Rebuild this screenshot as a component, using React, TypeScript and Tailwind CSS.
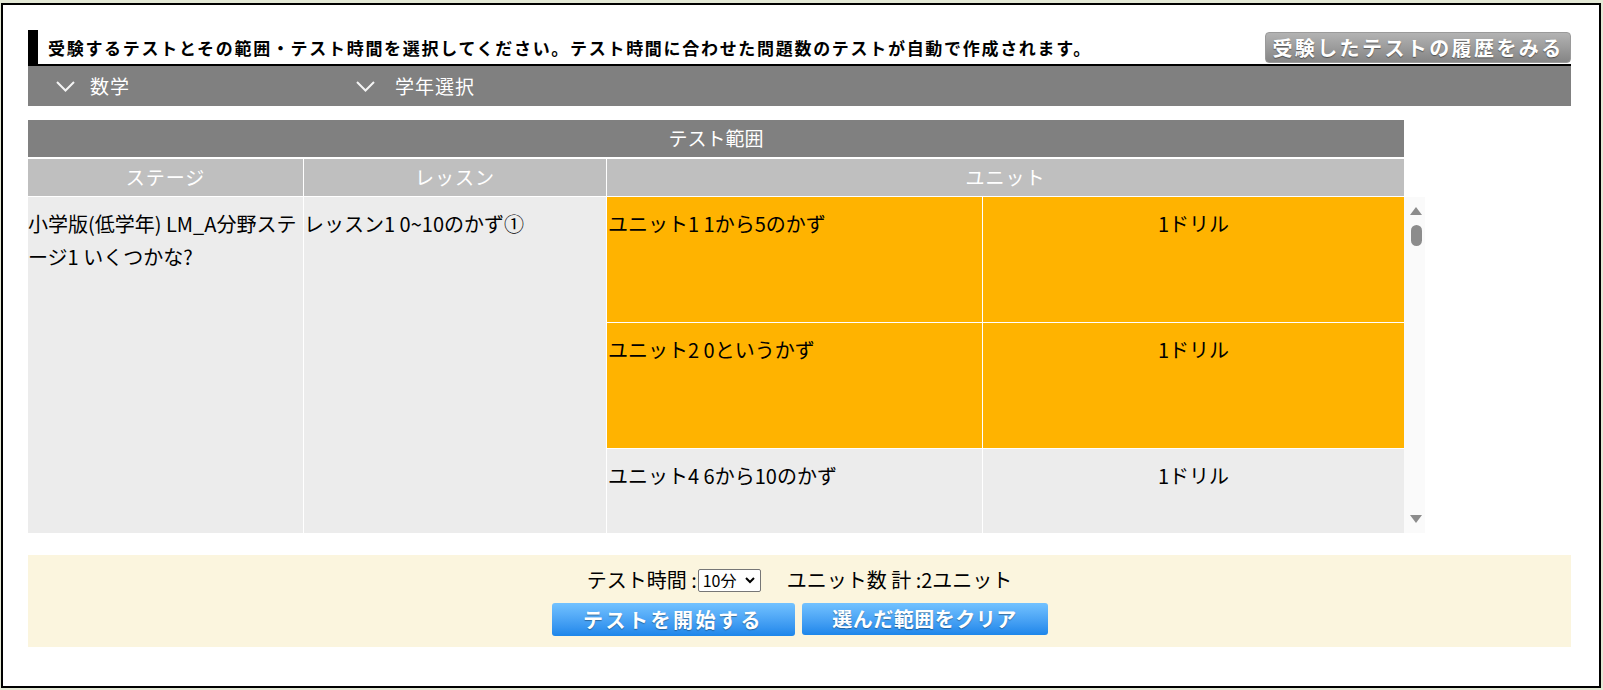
import React from "react";

const Chevron = () => (
  <svg width="19" height="11" viewBox="0 0 19 11" className="shrink-0">
    <path d="M1 1 L9.5 9.5 L18 1" stroke="#f4f4f4" strokeWidth="2" fill="none" />
  </svg>
);

type Unit = { name: string; drill: string; selected: boolean };

const units: Unit[] = [
  { name: "ユニット1 1から5のかず", drill: "1ドリル", selected: true },
  { name: "ユニット2 0というかず", drill: "1ドリル", selected: true },
  { name: "ユニット4 6から10のかず", drill: "1ドリル", selected: false },
];

export default function App() {
  return (
    <div className="w-[1603px] h-[690px] bg-[#e3e8d5] pl-px pt-[3px] font-['Noto_Sans_CJK_JP',sans-serif] text-black overflow-hidden">
      <div className="w-[1600px] h-[685px] border-2 border-black bg-white pl-[25px] pt-[25px]">
        <div className="w-[1543px]">
          {/* Title row */}
          <div className="flex h-[36px] border-b-2 border-black">
            <div className="w-[10px] h-[34px] bg-black shrink-0" />
            <div className="flex-1 flex items-center h-[34px] pl-[10px] text-[17px] font-bold tracking-[1.7px] leading-none whitespace-nowrap">
              受験するテストとその範囲・テスト時間を選択してください。テスト時間に合わせた問題数のテストが自動で作成されます。
            </div>
            <button className="mt-[2px] h-[31px] w-[306px] shrink-0 rounded-[4px] border border-[#9a9a9a] bg-gradient-to-b from-[#b3b3b3] to-[#858585] text-white text-[20px] font-bold tracking-[2.4px] leading-none flex items-center justify-center [text-shadow:0_1px_1px_rgba(0,0,0,0.45)]">
              受験したテストの履歴をみる
            </button>
          </div>

          {/* Nav bar */}
          <div className="flex h-[40px] bg-[#808080] items-center text-white text-[19px] tracking-[1px]">
            <div className="w-[300px] flex items-center gap-[15px] pl-[28px]">
              <Chevron />
              <span>数学</span>
            </div>
            <div className="w-[300px] flex items-center gap-[20px] pl-[28px]">
              <Chevron />
              <span>学年選択</span>
            </div>
          </div>

          {/* Table */}
          <div className="mt-[14px] w-[1397px]">
            <div className="w-[1376px] h-[37px] bg-[#808080] text-white text-[19px] flex items-center justify-center">
              テスト範囲
            </div>
            <div className="mt-[2px] w-[1376px] h-[37px] bg-[#bfbfbf] text-white text-[19px] tracking-[1px] flex">
              <div className="w-[276px] border-r border-white flex items-center justify-center">ステージ</div>
              <div className="w-[303px] border-r border-white flex items-center justify-center">レッスン</div>
              <div className="flex-1 flex items-center justify-center">ユニット</div>
            </div>
            <div className="flex h-[337px] border-t border-white">
              <div className="w-[1376px] flex overflow-hidden text-[20px] leading-[33px]">
                <div className="w-[276px] shrink-0 bg-[#ececec] border-r border-white pt-[10px] whitespace-nowrap overflow-hidden">
                  小学版(低学年) LM_A分野ステ
                  <br />
                  ージ1 いくつかな?
                </div>
                <div className="w-[303px] shrink-0 bg-[#ececec] border-r border-white pt-[10px] whitespace-nowrap overflow-hidden">
                  レッスン1 0~10のかず①
                </div>
                <div className="flex-1 flex flex-col">
                  {units.map((u) => (
                    <div
                      key={u.name}
                      className={`flex h-[126px] shrink-0 border-b border-white ${u.selected ? "bg-[#ffb300]" : "bg-[#ececec]"}`}
                    >
                      <div className="w-[376px] shrink-0 border-r border-white pt-[10px] pl-px whitespace-nowrap">
                        {u.name}
                      </div>
                      <div className="flex-1 pt-[10px] text-center">{u.drill}</div>
                    </div>
                  ))}
                </div>
              </div>
              {/* Scrollbar */}
              <div className="w-[21px] h-[336px] bg-[#fafafa] flex flex-col items-center pt-[10px] pb-[10px] pl-[3px]">
                <svg width="12" height="8" viewBox="0 0 12 8">
                  <path d="M6 0 L12 8 L0 8 Z" fill="#8c8c8c" />
                </svg>
                <div className="mt-[10px] w-[11px] h-[21px] rounded-full bg-[#8c8c8c]" />
                <div className="flex-1" />
                <svg width="12" height="8" viewBox="0 0 12 8">
                  <path d="M0 0 L12 0 L6 8 Z" fill="#8c8c8c" />
                </svg>
              </div>
            </div>
          </div>

          {/* Footer */}
          <div className="mt-[22px] h-[92px] bg-[#fbf5de] flex flex-col items-center pt-[13px]">
            <div className="flex items-center h-[24px] text-[20px] leading-none">
              <span>テスト時間 :</span>
              <div className="relative ml-[1px]">
                <select
                  defaultValue="10"
                  className="appearance-none w-[63px] h-[23px] border border-[#767676] rounded-[2px] bg-white pl-[4px] text-[16px] leading-none font-['Noto_Sans_CJK_JP',sans-serif]"
                >
                  <option value="10">10分</option>
                  <option value="20">20分</option>
                  <option value="30">30分</option>
                </select>
                <svg className="absolute right-[6px] top-[8px] pointer-events-none" width="10" height="7" viewBox="0 0 10 7">
                  <path d="M1 1 L5 5 L9 1" stroke="#000" strokeWidth="2" fill="none" />
                </svg>
              </div>
              <span className="ml-[26px]">ユニット数 計 :2ユニット</span>
            </div>
            <div className="mt-[11px] flex gap-[7px]">
              <button className="w-[243px] h-[33px] rounded-[3px] bg-gradient-to-b from-[#72c2ff] to-[#1c86ea] text-white text-[20px] font-bold tracking-[2.5px] leading-none flex items-center justify-center [text-shadow:0_1px_1px_rgba(0,0,0,0.35)]">
                テストを開始する
              </button>
              <button className="w-[246px] h-[32px] rounded-[3px] bg-gradient-to-b from-[#72c2ff] to-[#1c86ea] text-white text-[20px] font-bold tracking-[0.5px] leading-none flex items-center justify-center [text-shadow:0_1px_1px_rgba(0,0,0,0.35)]">
                選んだ範囲をクリア
              </button>
            </div>
          </div>
        </div>
      </div>
    </div>
  );
}
